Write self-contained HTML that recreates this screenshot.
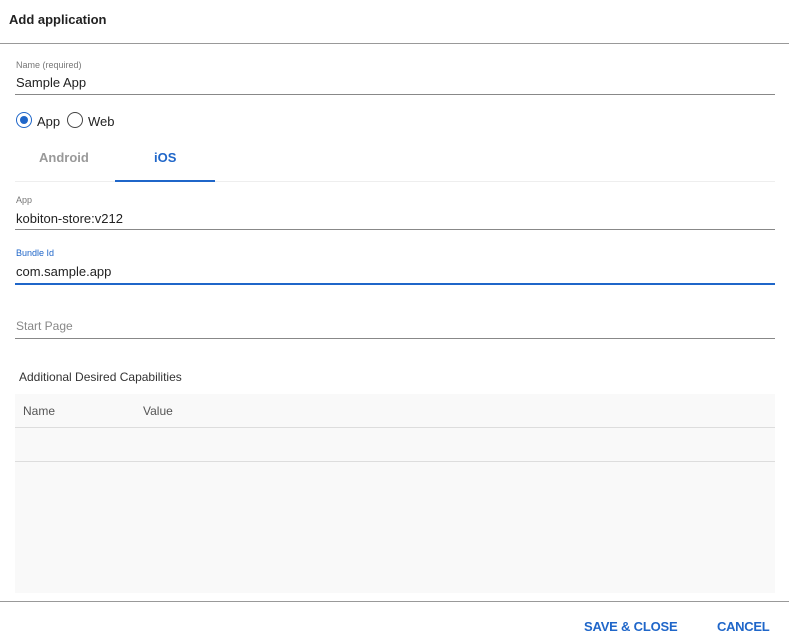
<!DOCTYPE html>
<html><head><style>
body{margin:0;width:789px;height:643px;background:#fff;font-family:"Liberation Sans",sans-serif;position:relative;overflow:hidden;color:#222}
.a{position:absolute}
.lbl{font-size:9px;color:#777}
.val{font-size:13px;color:#222}
.line{height:1px;background:#888}
</style></head><body>
<div class="a" style="left:9px;top:12px;font-size:13px;font-weight:bold">Add application</div>
<div class="a" style="left:0;top:43px;width:789px;height:1px;background:#999"></div>
<div class="a lbl" style="left:16px;top:60px">Name (required)</div>
<div class="a val" style="left:16px;top:75px">Sample App</div>
<div class="a line" style="left:15px;top:94px;width:760px"></div>
<div class="a" style="left:16px;top:112px;width:13px;height:13px;border:1.5px solid #1f66c9;border-radius:50%;box-sizing:border-box;width:16px;height:16px"></div>
<div class="a" style="left:20px;top:116px;width:8px;height:8px;background:#1f66c9;border-radius:50%"></div>
<div class="a val" style="left:37px;top:114px">App</div>
<div class="a" style="left:67px;top:112px;width:16px;height:16px;box-sizing:border-box;border:1.5px solid #444;border-radius:50%"></div>
<div class="a val" style="left:88px;top:114px">Web</div>
<div class="a" style="left:39px;top:150px;font-size:13px;font-weight:bold;color:#999">Android</div>
<div class="a" style="left:154px;top:150px;font-size:13px;font-weight:bold;color:#1f66c9">iOS</div>
<div class="a" style="left:15px;top:181px;width:760px;height:1px;background:#eee"></div>
<div class="a" style="left:115px;top:180px;width:100px;height:2px;background:#1f66c9"></div>
<div class="a lbl" style="left:16px;top:195px">App</div>
<div class="a val" style="left:16px;top:211px">kobiton-store:v212</div>
<div class="a line" style="left:15px;top:229px;width:760px"></div>
<div class="a lbl" style="left:16px;top:248px;color:#1f66c9">Bundle Id</div>
<div class="a val" style="left:16px;top:264px">com.sample.app</div>
<div class="a" style="left:15px;top:283px;width:760px;height:2px;background:#1f66c9"></div>
<div class="a" style="left:16px;top:319px;font-size:12px;color:#888">Start Page</div>
<div class="a line" style="left:15px;top:338px;width:760px"></div>
<div class="a" style="left:19px;top:370px;font-size:12px;color:#333">Additional Desired Capabilities</div>
<div class="a" style="left:15px;top:394px;width:760px;height:199px;background:#f9f9f9"></div>
<div class="a" style="left:23px;top:404px;font-size:12px;color:#555">Name</div>
<div class="a" style="left:143px;top:404px;font-size:12px;color:#555">Value</div>
<div class="a" style="left:15px;top:427px;width:760px;height:1px;background:#ddd"></div>
<div class="a" style="left:15px;top:461px;width:760px;height:1px;background:#ddd"></div>
<div class="a" style="left:0;top:601px;width:789px;height:1px;background:#999"></div>
<div class="a" style="left:584px;top:619px;font-size:13px;font-weight:bold;color:#1f66c9;letter-spacing:-0.2px">SAVE &amp; CLOSE</div>
<div class="a" style="left:717px;top:619px;font-size:13px;font-weight:bold;color:#1f66c9;letter-spacing:-0.3px">CANCEL</div>
</body></html>
